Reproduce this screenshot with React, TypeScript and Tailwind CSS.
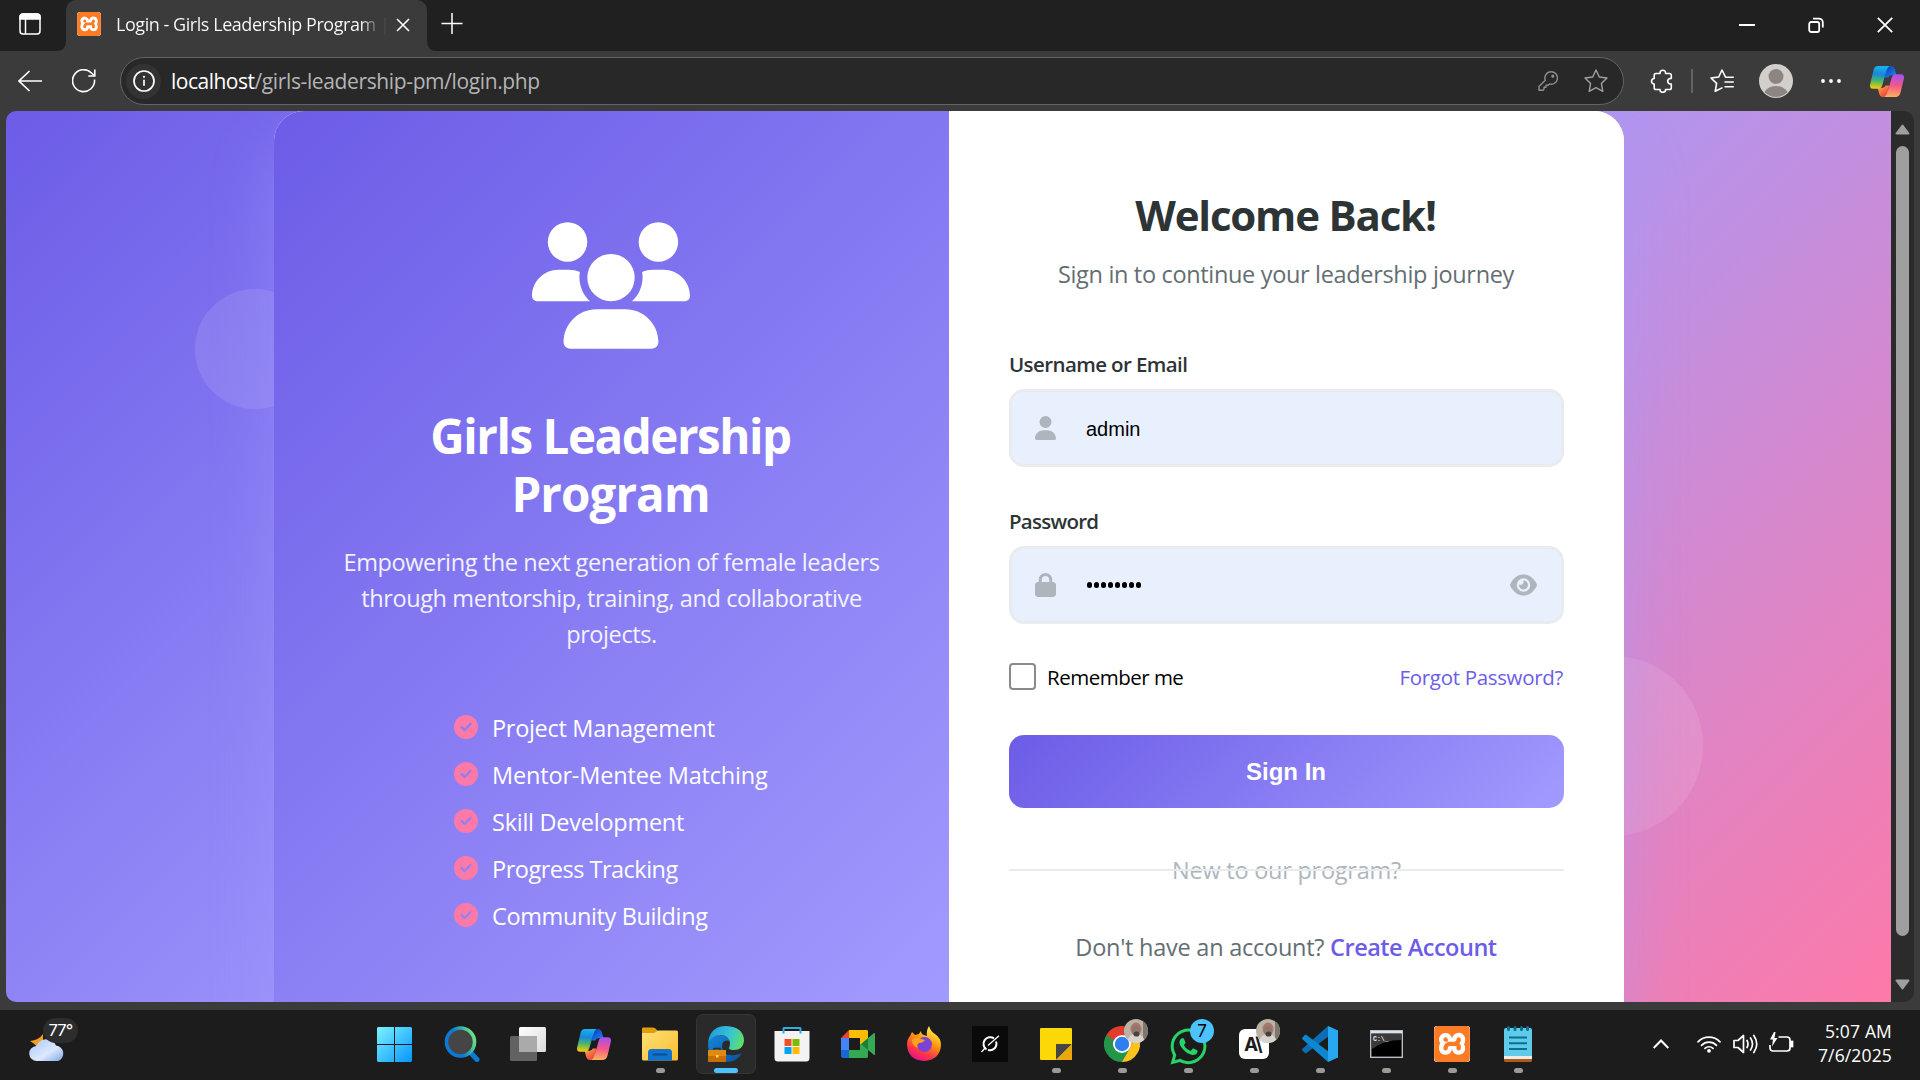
import React from 'react';
import { FaUsers, FaUser, FaLock, FaEye, FaCircleCheck, FaWhatsapp } from 'react-icons/fa6';
import { SiXampp } from 'react-icons/si';

const features = [
  { label: 'Project Management', tracking: 'tracking-[-0.3px]' },
  { label: 'Mentor-Mentee Matching', tracking: 'tracking-[-0.17px]' },
  { label: 'Skill Development', tracking: 'tracking-[-0.26px]' },
  { label: 'Progress Tracking', tracking: 'tracking-[-0.5px]' },
  { label: 'Community Building', tracking: 'tracking-[-0.38px]' },
];

function Copilot({ id, className }: { id: string; className: string }) {
  const ribbon = 'M7.5 0H19Q17 1 16 4.5L12 18.5Q11 22 8 22H3Q-.6 22 .1 18L3.4 4Q4.5 0 7.5 0Z';
  const fold = 'M16 0H20.5Q23.5 0 24.2 3.5L25.6 9H20.5Q18.6 9 17.8 11L14.4 11Z';
  return (
    <svg viewBox="0 0 33 30" className={className} fill="none">
      <defs>
        <linearGradient id={`${id}a`} x1="8" y1="0" x2="6" y2="22" gradientUnits="userSpaceOnUse">
          <stop offset="0" stopColor="#1bb2f0" />
          <stop offset=".35" stopColor="#1687dc" />
          <stop offset=".65" stopColor="#4bb56b" />
          <stop offset="1" stopColor="#fdcb05" />
        </linearGradient>
        <linearGradient id={`${id}b`} x1="8" y1="0" x2="6" y2="22" gradientUnits="userSpaceOnUse">
          <stop offset="0" stopColor="#fcae5c" />
          <stop offset=".5" stopColor="#f4568c" />
          <stop offset="1" stopColor="#a24ff5" />
        </linearGradient>
        <linearGradient id={`${id}c`} x1="17" y1="0" x2="24" y2="9" gradientUnits="userSpaceOnUse">
          <stop offset="0" stopColor="#0c3fb4" />
          <stop offset="1" stopColor="#1f7df2" />
        </linearGradient>
        <linearGradient id={`${id}d`} x1="17" y1="0" x2="24" y2="9" gradientUnits="userSpaceOnUse">
          <stop offset="0" stopColor="#e8384a" />
          <stop offset="1" stopColor="#ff9a3c" />
        </linearGradient>
      </defs>
      <path d={fold} fill={`url(#${id}c)`} />
      <path d={fold} fill={`url(#${id}d)`} transform="rotate(180 16.5 15)" />
      <path d={ribbon} fill={`url(#${id}a)`} />
      <path d={ribbon} fill={`url(#${id}b)`} transform="rotate(180 16.5 15)" />
    </svg>
  );
}

function Xampp({ className }: { className: string }) {
  return (
    <span className={`${className} grid place-items-center overflow-hidden rounded-[3px] bg-white`}>
      <SiXampp className="h-full w-full text-[#fb7a24]" />
    </span>
  );
}

function TitleBar() {
  return (
    <div className="flex h-[51px] items-start bg-[#202020] text-white">
      <svg className="ml-[19px] mt-[13px] h-[22px] w-[22px]" viewBox="0 0 22 22" fill="none" stroke="#fff" strokeWidth="1.5">
        <rect x="1" y="1" width="20" height="20" rx="3" />
        <path d="M1 4a3 3 0 0 1 3-3h14a3 3 0 0 1 3 3v2H1z" fill="#fff" />
        <path d="M6.5 6v15" />
      </svg>
      <svg className="ml-[15px] h-[51px] w-[10px]" viewBox="0 0 10 51">
        <path d="M0 51Q10 51 10 41V51Z" fill="#3b3b3b" />
      </svg>
      <div className="flex h-[51px] w-[361px] items-center rounded-t-[10px] bg-[#3b3b3b] pl-[11px] pb-[3px]">
        <Xampp className="h-6 w-6" />
        <div className="ml-[15px] w-[272px] whitespace-nowrap bg-linear-to-r from-white from-90% to-[#4a4a4a] to-97% bg-clip-text text-[18px] leading-[26px] tracking-[-0.45px] text-transparent">
          Login - Girls Leadership Program |
        </div>
        <svg className="ml-[8px] mt-[2px] h-[14px] w-[14px]" viewBox="0 0 14 14" stroke="#fff" strokeWidth="1.6">
          <path d="M1 1l12 12M13 1L1 13" />
        </svg>
      </div>
      <svg className="h-[51px] w-[10px]" viewBox="0 0 10 51">
        <path d="M0 41Q0 51 10 51H0Z" fill="#3b3b3b" />
      </svg>
      <svg className="ml-[4px] mt-[13px] h-[21px] w-[22px]" viewBox="0 0 22 21" stroke="#fff" strokeWidth="1.5">
        <path d="M11 0v21M.5 10.5h21" />
      </svg>
      <div className="ml-auto mr-[27px] mt-[17px] flex items-center gap-[53px]">
        <svg className="h-4 w-4" viewBox="0 0 16 16" stroke="#fff" strokeWidth="2">
          <path d="M0 8h16" />
        </svg>
        <svg className="h-4 w-4" viewBox="0 0 16 16" fill="none" stroke="#fff" strokeWidth="1.8">
          <rect x="1.2" y="5" width="10" height="10" rx="2" />
          <path d="M5 1.6h6a3.8 3.8 0 0 1 3.8 3.8v5.2" />
        </svg>
        <svg className="h-4 w-4" viewBox="0 0 16 16" stroke="#fff" strokeWidth="1.8">
          <path d="M.8.8l14.4 14.4M15.2.8L.8 15.2" />
        </svg>
      </div>
    </div>
  );
}

function Toolbar() {
  return (
    <div className="flex h-[60px] items-center bg-[#3b3b3b]">
      <svg className="ml-[18px] h-[22px] w-6" viewBox="0 0 24 22" fill="none" stroke="#fff" strokeWidth="1.6">
        <path d="M24 11H1M11.5 1L1 11l10.5 10" />
      </svg>
      <svg className="ml-[30px] h-6 w-6" viewBox="0 0 24 24" fill="none" stroke="#fff" strokeWidth="1.6">
        <path d="M22.5 10.5A11 11 0 1 1 19.500 4l3 2.600" />
        <path d="M22.800 .5v6.500h-6.500" />
      </svg>
      <div className="ml-6 flex h-12 w-[1504px] items-center rounded-full border-[1.5px] border-[#646464] bg-[#282828] pl-[5px]">
        <span className="grid h-[35px] w-[35px] place-items-center rounded-full bg-[#333]">
          <svg className="h-[22px] w-[22px]" viewBox="0 0 22 22" fill="none" stroke="#fff" strokeWidth="1.7">
            <circle cx="11" cy="11" r="10" />
            <path d="M11 9.8v6" />
            <circle cx="11" cy="6.8" r=".5" strokeWidth="1.2" />
          </svg>
        </span>
        <div className="ml-[10px] whitespace-nowrap text-[21px] leading-[28px]">
          <span className="tracking-[-0.5px] text-white">localhost</span>
          <span className="tracking-[-0.37px] text-[#b4b4b4]">/girls-leadership-pm/login.php</span>
        </div>
        <svg className="ml-auto h-5 w-5" viewBox="0 0 20 20" fill="none" stroke="#8f8f8f" strokeWidth="1.4" strokeLinejoin="round">
          <path d="M13 .8a6.200 6.200 0 1 1-1.600 12.100l-1.400 1.400H8v2H6v2l-1 1H1V15.600l6.300-6.300A6.200 6.200 0 0 1 13 .8z" />
          <circle cx="14.8" cy="5.2" r=".9" fill="#8f8f8f" />
        </svg>
        <svg className="ml-[26px] mr-[15px] h-6 w-6" viewBox="0 0 24 24" fill="none" stroke="#a0a0a0" strokeWidth="1.4" strokeLinejoin="round">
          <path d="M12 1l3.300 7 7.700 1-5.600 5.400 1.400 7.900L12 18.600 5.200 22.300l1.400-7.900L1 9l7.700-1z" />
        </svg>
      </div>
      <svg className="ml-[26px] h-6 w-6" viewBox="0 0 24 24" fill="none" stroke="#fff" strokeWidth="1.6" strokeLinejoin="round">
        <path d="M6 4.500H10V4A2.800 2.800 0 0 1 15.600 4V4.500H19.500A1.800 1.800 0 0 1 21.300 6.300V9.500H20A2.800 2.800 0 0 0 20 15H21.300V18.700A1.800 1.800 0 0 1 19.500 20.500H15.600A2.800 2.800 0 0 1 10 20.500H6A1.800 1.800 0 0 1 4.200 18.700V15H3.800A2.800 2.800 0 0 1 3.800 9.500H4.200V6.300A1.800 1.800 0 0 1 6 4.500Z" />
      </svg>
      <span className="ml-[17px] h-6 w-[1.5px] bg-[#646464]" />
      <svg className="ml-[17px] h-6 w-6" viewBox="0 0 24 24" fill="none" stroke="#fff" strokeWidth="1.6" strokeLinejoin="round">
        <path d="M23.800 8.200h-8.300L12 1 8.700 8 1 9l5.600 5.400-1.400 7.900L12.500 18.600M14.500 13h9.300M14.500 17.800h9.300" />
      </svg>
      <svg className="ml-[25px] h-[34px] w-[34px]" viewBox="0 0 34 34">
        <clipPath id="avatar"><circle cx="17" cy="17" r="16" /></clipPath>
        <circle cx="17" cy="17" r="17" fill="#d3d0cc" />
        <g clipPath="url(#avatar)" fill="#8b8682">
          <circle cx="17" cy="12.5" r="7.5" />
          <ellipse cx="17" cy="33" rx="13" ry="11" />
        </g>
      </svg>
      <svg className="ml-[28px] h-1 w-5" viewBox="0 0 20 4" fill="#fff">
        <circle cx="2" cy="2" r="1.9" />
        <circle cx="10" cy="2" r="1.9" />
        <circle cx="18" cy="2" r="1.9" />
      </svg>
      <Copilot id="tb" className="ml-[29px] h-[31px] w-[34px]" />
    </div>
  );
}

function BrandPanel() {
  return (
    <section className="flex w-[675px] flex-col rounded-tl-[30px] bg-[linear-gradient(135deg,#6c5ce7,#a29bfe)] pt-[111px] text-white">
      <FaUsers className="mr-px h-[127px] w-[158px] self-center" />
      <h1 className="mr-[2px] mt-[58px] text-center text-[47.5px] font-bold leading-[57.6px] tracking-[-1.45px]">
        <span className="block h-[57.6px]">Girls Leadership</span>
        <span className="block h-[57.6px] tracking-[-0.9px]">Program</span>
      </h1>
      <p className="mt-[22px] text-center text-[23.5px] leading-[36px] tracking-[-0.4px] text-white/90">
        Empowering the next generation of female leaders
        <br />
        through mentorship, training, and collaborative
        <br />
        projects.
      </p>
      <ul className="ml-[180px] mt-[53px]">
        {features.map((f) => (
          <li key={f.label} className="flex h-[47px] items-center">
            <FaCircleCheck className="mb-1 h-6 w-6 text-[#fd79a8]" />
            <span className={`ml-[14px] text-[23.5px] leading-[47px] ${f.tracking}`}>{f.label}</span>
          </li>
        ))}
      </ul>
    </section>
  );
}

function LoginPanel() {
  return (
    <section className="flex w-[675px] flex-col rounded-tr-[30px] bg-white px-[60px] pt-[79px] text-[#2d3436]">
      <h2 className="mr-[2px] text-center text-[42px] font-bold leading-[50px] tracking-[-1.2px]">Welcome Back!</h2>
      <p className="mr-px mt-4 text-center text-[23.5px] leading-[36px] tracking-[-0.33px] text-[#636e72]">
        Sign in to continue your leadership journey
      </p>

      <label className="mt-[57px] text-[20.5px] font-semibold leading-[30px] tracking-[-0.6px]">Username or Email</label>
      <div className="mt-[10px] flex h-[78px] items-center rounded-[15px] border-[3px] border-[#e9ecef] bg-[#e8f0fe] pl-[23px]">
        <FaUser className="h-6 w-[21px] text-[#adb5bd]" />
        <span className="ml-[30px] mt-[2px] font-['Liberation_Sans'] text-[20px] leading-6 text-black">admin</span>
      </div>

      <label className="mt-[39px] text-[20.5px] font-semibold leading-[30px] tracking-[-0.75px]">Password</label>
      <div className="mt-[10px] flex h-[78px] items-center rounded-[15px] border-[3px] border-[#e9ecef] bg-[#e8f0fe] pl-[23px] pr-6">
        <FaLock className="h-6 w-[21px] text-[#adb5bd]" />
        <div className="ml-[31px] flex gap-[1.7px]">
          {Array.from({ length: 8 }, (_, i) => (
            <span key={i} className="h-[5.3px] w-[5.3px] rounded-full bg-black" />
          ))}
        </div>
        <FaEye className="ml-auto h-6 w-[27px] text-[#adb5bd]" />
      </div>

      <div className="mt-[39px] flex h-[27px] items-center text-[20.5px] leading-[27px]">
        <span className="h-[27px] w-[27px] rounded-[4px] border-2 border-[#8a8a8a] bg-white" />
        <span className="ml-[11px] mt-px tracking-[-0.5px] text-black">Remember me</span>
        <a className="ml-auto mr-px mt-px tracking-[-0.32px] text-[#6c5ce7]">Forgot Password?</a>
      </div>

      <button className="mt-[45px] h-[73px] rounded-[15px] bg-[linear-gradient(135deg,#6c5ce7,#a29bfe)] pr-px font-['Liberation_Sans'] text-[24px] font-bold text-white">
        Sign In
      </button>

      <div className="relative mt-[44px] text-center text-[23.5px] leading-[36px] tracking-[-0.25px] text-[#adb5bd]">
        New to our program?
        <span className="absolute inset-x-0 top-[17px] h-[2px] bg-[#e9ecef]" />
      </div>

      <p className="mr-px mt-[41px] text-center text-[23.5px] leading-[36px] tracking-[-0.25px] text-[#636e72]">
        Don't have an account? <a className="font-semibold tracking-[-0.5px] text-[#6c5ce7]">Create Account</a>
      </p>
    </section>
  );
}

function Viewport() {
  return (
    <main className="flex h-[899px] bg-[#3b3b3b] px-[6px] pb-[8px]">
      <div className="relative flex w-[1885px] items-stretch overflow-hidden rounded-l-[10px] bg-[linear-gradient(135deg,#6c5ce7_0%,#a29bfe_50%,#fd79a8_100%)] pl-[268px]">
        <span className="absolute left-[189px] top-[178px] h-[120px] w-[120px] rounded-full bg-white/10" />
        <span className="absolute left-[1517px] top-[545px] h-[180px] w-[180px] rounded-full bg-white/10" />
        <div className="relative flex rounded-t-[30px] bg-white shadow-[0_36px_60px_rgba(162,155,254,0.4)]">
          <BrandPanel />
          <LoginPanel />
        </div>
      </div>
      <div className="flex w-[23px] flex-col items-center rounded-r-[10px] bg-[#2b2b2b]">
        <svg className="mt-[13px] h-[11px] w-[15px]" viewBox="0 0 15 11">
          <path d="M7.500 1.500L13.500 9.500H1.500Z" fill="#9f9f9f" stroke="#9f9f9f" strokeWidth="2" strokeLinejoin="round" />
        </svg>
        <span className="mt-[11px] h-[790px] w-[13px] rounded-full bg-[#9f9f9f]" />
        <svg className="mt-[43px] h-[11px] w-[15px]" viewBox="0 0 15 11">
          <path d="M7.500 9.500L13.500 1.500H1.500Z" fill="#9f9f9f" stroke="#9f9f9f" strokeWidth="2" strokeLinejoin="round" />
        </svg>
      </div>
    </main>
  );
}

function Photo() {
  return (
    <svg className="absolute -top-[7px] left-[35px] h-6 w-6" viewBox="0 0 24 24">
      <clipPath id="photo"><circle cx="12" cy="12" r="12" /></clipPath>
      <g clipPath="url(#photo)">
        <rect width="24" height="24" fill="#b9b3a6" />
        <rect x="19" width="5" height="24" fill="#7d776e" />
        <path d="M3 24Q4 15 12 15T21 24Z" fill="#d8d4cc" />
        <ellipse cx="12" cy="10" rx="5.5" ry="6.5" fill="#b0746c" />
        <ellipse cx="12" cy="11.5" rx="4" ry="5" fill="#8a7a6e" />
        <ellipse cx="12.5" cy="15" rx="3" ry="2.6" fill="#4a413c" />
      </g>
    </svg>
  );
}

function Cell({ children, running, active }: { children: React.ReactNode; running?: boolean; active?: boolean }) {
  return (
    <div className="relative flex h-[70px] w-[66px] flex-col items-center">
      {active && <span className="absolute left-[3px] top-1 h-[60px] w-[60px] rounded-[7px] border border-[#353535] bg-[#2a2a2a]" />}
      <div className="relative mt-4 grid h-9 w-full place-items-center">{children}</div>
      {running && <span className="mt-[6px] h-[5px] w-[9px] rounded-full bg-[#9a9a9a]" />}
      {active && <span className="relative mt-[6px] h-[5px] w-6 rounded-full bg-[#4cc2ff]" />}
    </div>
  );
}

function Taskbar() {
  return (
    <footer className="flex h-[70px] bg-[#1c1c1c] text-white">
      <div className="relative ml-[26px] h-full w-[60px]">
        <svg className="absolute left-[3px] top-[24px] h-[28px] w-[38px]" viewBox="0 0 38 28">
          <defs>
            <linearGradient id="cloud" x1="0" y1="0" x2="1" y2="1">
              <stop offset="0" stopColor="#a9c7fb" />
              <stop offset=".6" stopColor="#dce8fd" />
              <stop offset="1" stopColor="#7fa4e8" />
            </linearGradient>
          </defs>
          <path d="M1 7Q10 6 14 0V14H9Q5 9 1 7Z" fill="#f99d1c" />
          <path d="M8 27a7.500 7.500 0 0 1-.5-15A10.500 10.500 0 0 1 27 11.500a8 8 0 0 1 2 15.500Z" fill="url(#cloud)" />
        </svg>
        <span className="absolute left-[17px] top-[8px] grid h-[25px] w-[35px] place-items-center rounded-full bg-[#2d2d2d] font-['Inter'] text-[16.5px] tracking-[-0.8px]">77°</span>
      </div>
      <div className="ml-[277px] flex">
        <Cell>
          <svg className="mr-[3px] h-[35px] w-[35px]" viewBox="0 0 35 35">
            <defs>
              <linearGradient id="win" x1="0" y1="0" x2="35" y2="35" gradientUnits="userSpaceOnUse">
                <stop offset="0" stopColor="#7df3ff" />
                <stop offset="1" stopColor="#0595ff" />
              </linearGradient>
            </defs>
            <path d="M1 0h16v17H0V1zM18 0h16l1 1v16H18zM0 18h17v17H1l-1-1zM18 18h17v16l-1 1H18z" fill="url(#win)" />
          </svg>
        </Cell>
        <Cell>
          <svg className="h-9 w-9" viewBox="0 0 36 36" fill="none">
            <defs>
              <linearGradient id="srch" x1="4" y1="18" x2="30" y2="8" gradientUnits="userSpaceOnUse">
                <stop offset=".35" stopColor="#0a7ad8" />
                <stop offset="1" stopColor="#6ceb7c" />
              </linearGradient>
            </defs>
            <path d="M27 27l6 6.500" stroke="#0a7ad8" strokeWidth="5" strokeLinecap="round" />
            <circle cx="16.5" cy="16" r="14" fill="#454545" stroke="url(#srch)" strokeWidth="3.6" />
          </svg>
        </Cell>
        <Cell>
          <svg className="h-[34px] w-9" viewBox="0 0 36 34">
            <defs>
              <linearGradient id="tv" x1="0" y1="0" x2="1" y2="1">
                <stop offset="0" stopColor="#fff" />
                <stop offset="1" stopColor="#dadada" />
              </linearGradient>
            </defs>
            <rect x="9" width="27" height="25" rx="1.5" fill="url(#tv)" />
            <rect y="9" width="27" height="25" rx="1.5" fill="#626262" />
            <rect x="9" y="9" width="18" height="16" fill="#aaa" />
          </svg>
        </Cell>
        <Cell><Copilot id="tk" className="h-[31px] w-[34px]" /></Cell>
        <Cell running>
          <svg className="h-[34px] w-9" viewBox="0 0 36 34">
            <defs>
              <linearGradient id="fold" x1="0" y1="0" x2="1" y2="1">
                <stop offset="0" stopColor="#ffe07a" />
                <stop offset="1" stopColor="#f9bd2b" />
              </linearGradient>
            </defs>
            <path d="M0 1.500Q0 .500 1.500 .500H11Q13 .500 14 2L16 4V9H0Z" fill="#e09e0c" />
            <path d="M0 6H11Q13 6 14.500 4.500T18 3.500H34.500Q36 3.500 36 5V32Q36 33.500 34.500 33.500H1.500Q0 33.500 0 32Z" fill="url(#fold)" />
            <path d="M6 33.500V25.500Q6 22 9.500 22H26.500Q30 22 30 25.500V33.500Z" fill="#1173cc" />
            <path d="M11.500 27.500h13" stroke="#0b4f96" strokeWidth="2" strokeLinecap="round" />
          </svg>
        </Cell>
        <Cell active>
          <svg className="h-9 w-9" viewBox="0 0 36 36">
            <defs>
              <linearGradient id="e1" x1="2" y1="8" x2="36" y2="22" gradientUnits="userSpaceOnUse">
                <stop offset="0" stopColor="#1f9fdf" />
                <stop offset=".5" stopColor="#38c3d4" />
                <stop offset="1" stopColor="#66e553" />
              </linearGradient>
              <linearGradient id="e2" x1="0" y1="0" x2="1" y2="1">
                <stop offset="0" stopColor="#1787d9" />
                <stop offset="1" stopColor="#0a50a0" />
              </linearGradient>
            </defs>
            <path d="M0 18Q1 9 11 9Q20 9 22 15Q14 13 14 21Q15 31 27 29Q33 28 34 27Q29 36 18 36Q0 35 0 18Z" fill="url(#e2)" />
            <path d="M0 17Q2 0 18 0Q36 1 36 15Q35 24 26 24Q21 24 21 22Q22 20 22 17Q21 9 12 9Q4 9 0 17Z" fill="url(#e1)" />
            <rect y="24" width="18" height="12" fill="#c46e04" />
            <rect y="24" width="18" height="6" fill="#e08a12" />
            <path d="M6 24V22.500H12V24" fill="none" stroke="#3a2a18" strokeWidth="1.5" />
            <rect x="8" y="29" width="2.5" height="2.5" fill="#ffe04a" />
          </svg>
        </Cell>
        <Cell>
          <svg className="h-9 w-9" viewBox="0 0 36 36">
            <path d="M.500 5H35.500V32Q35.500 35.500 32 35.500H4Q.500 35.500 .500 32Z" fill="#f3f3f3" />
            <path d="M9.500 7.500V2.500Q9.500 2 10 2H26Q26.500 2 26.500 2.500V7.500" fill="none" stroke="#29aee8" strokeWidth="2" />
            <path d="M10.500 13h7v7h-7z" fill="#f25022" />
            <path d="M18.500 13h7v7h-7z" fill="#7fba00" />
            <path d="M10.500 21h7v7h-7z" fill="#00a4ef" />
            <path d="M18.500 21h7v7h-7z" fill="#ffb900" />
          </svg>
        </Cell>
        <Cell>
          <svg className="h-7 w-[34px]" viewBox="0 0 34 28">
            <path d="M8 0H26Q27 0 27 1.500V14H19V8H8Z" fill="#fbbc04" />
            <path d="M8 0V8H0Z" fill="#ea4335" />
            <path d="M0 8H8V20H0Z" fill="#4285f4" />
            <path d="M0 20H8V28H2Q0 28 0 26Z" fill="#1967d2" />
            <path d="M8 20H19V14H27V26.500Q27 28 25.500 28H8Z" fill="#34a853" />
            <path d="M20 14L27 8V20Z" fill="#188038" />
            <path d="M27 8L33 3Q34 2.500 34 4V24Q34 25.500 33 25L27 20Z" fill="#34a853" />
          </svg>
        </Cell>
        <Cell>
          <svg className="h-9 w-[34px]" viewBox="0 0 34 36">
            <defs>
              <linearGradient id="ff" x1="26" y1="2" x2="10" y2="34" gradientUnits="userSpaceOnUse">
                <stop offset="0" stopColor="#fff44f" />
                <stop offset=".4" stopColor="#ff980e" />
                <stop offset=".75" stopColor="#ff3647" />
                <stop offset="1" stopColor="#e31587" />
              </linearGradient>
            </defs>
            <path d="M5 6Q7 8 8 9L12 8Q13 6 14 5Q14 8 17 9L20 10Q19 5 22 0Q24 6 28 8Q34 12 34 19Q33 34 17 35Q1 34 0 19Q0 13 3 10Q4 8 5 6Z" fill="url(#ff)" />
            <circle cx="17.5" cy="18.5" r="7.5" fill="#7a43d6" />
            <path d="M5 14Q9 10 14 13L18 14Q16 17 12 17Q9 19 11 22Q5 20 5 14Z" fill="#ffa21a" />
          </svg>
        </Cell>
        <Cell>
          <svg className="h-9 w-9" viewBox="0 0 36 36" fill="none" stroke="#fff">
            <rect width="36" height="36" fill="#0a0a0a" stroke="none" />
            <path d="M14.500 23.500A6.500 6.500 0 0 1 22 12.300M24 15.500A6.500 6.500 0 0 1 16 24" strokeWidth="2" />
            <path d="M9.500 26L13.500 21.500M16 19.500L27 9.800" strokeWidth="1.3" />
          </svg>
        </Cell>
        <Cell running>
          <svg className="h-8 w-8" viewBox="0 0 32 32">
            <rect width="32" height="32" rx="1" fill="#fdd808" />
            <path d="M16 16H32L16 32Z" fill="#454545" />
            <path d="M32 16V31Q32 32 31 32H16Z" fill="#eaa80c" />
          </svg>
        </Cell>
        <Cell running>
          <svg className="h-9 w-9" viewBox="0 0 36 36">
            <path d="M18 18L2.400 9A18 18 0 0 1 33.600 9Z" fill="#e33b2e" />
            <path d="M18 18L33.600 9A18 18 0 0 1 18 36Z" fill="#fcc31e" />
            <path d="M18 18L18 36A18 18 0 0 1 2.400 9Z" fill="#22974a" />
            <path d="M18 9H33.600L25.800 22.500ZM10.200 22.500L2.400 9L18 12Z" fill="#e33b2e" />
            <path d="M25.800 22.500L18 36L12 24Z" fill="#22974a" />
            <path d="M25.800 22.500L33.600 9H20Z" fill="#fcc31e" />
            <path d="M10.200 22.500L2.400 9L14 17Z" fill="#22974a" />
            <circle cx="18" cy="18" r="9" fill="#fff" />
            <circle cx="18" cy="18" r="7.2" fill="#2d7ff0" />
          </svg>
          <Photo />
        </Cell>
        <Cell running>
          <FaWhatsapp className="h-[41px] w-[41px] text-[#25d366]" />
          <span className="absolute -top-[7px] left-[35px] grid h-6 w-6 place-items-center rounded-full bg-[#4cc2ff] font-['Inter'] text-[17px] leading-none text-black">7</span>
        </Cell>
        <Cell running>
          <span className="grid h-[30px] w-[30px] place-items-center rounded-[6px] bg-white pr-[3px] font-['Inter'] text-[19px] font-bold leading-none tracking-[-1.5px] text-[#1c1c1c]">A\</span>
          <Photo />
        </Cell>
        <Cell running>
          <svg className="h-9 w-9" viewBox="0 0 36 36">
            <path d="M26 0L27 10L4.500 27Q3.500 27.500 2.800 27L.500 24.500Q-.300 23.500 .500 22.800Z" fill="#0b6db5" />
            <path d="M26 36L27 26L4.500 9Q3.500 8.500 2.800 9L.500 11.500Q-.300 12.500 .500 13.200Z" fill="#0f86d0" />
            <path d="M26 0L36 4.500V31.500L26 36Z" fill="#29a8f2" />
          </svg>
        </Cell>
        <Cell running>
          <svg className="h-7 w-[33px]" viewBox="0 0 33 28">
            <rect x=".7" y=".7" width="31.6" height="26.6" fill="#000" stroke="#b9bfc6" strokeWidth="1.4" />
            <rect x="1" y="1" width="31" height="2.5" fill="#dfe3e8" />
            <path d="M2 4H31V10Q14 10 2 19Z" fill="#3a3a3a" />
            <text x="3" y="10.5" fontSize="6.5" fontFamily="Liberation Mono" fontWeight="bold" fill="#eee">C:\_</text>
          </svg>
        </Cell>
        <Cell running><Xampp className="h-9 w-9" /></Cell>
        <Cell running>
          <svg className="h-9 w-7" viewBox="0 0 28 36">
            <path d="M0 30H28V34.500Q28 36 26.500 36H1.500Q0 36 0 34.500Z" fill="#b05a14" />
            <path d="M0 28H28V33H0Z" fill="#ececec" />
            <path d="M0 4Q0 2 2 2H26Q28 2 28 4V30H0Z" fill="#5fcbe8" />
            <path d="M5 11.500h18M5 17.300h18M5 23h18" stroke="#0b6f95" strokeWidth="2" />
            <path d="M4.500 1.500v2M11 1.500v2M17.500 1.500v2M23.500 1.500v2" stroke="#0b6f95" strokeWidth="3" strokeLinecap="round" />
          </svg>
        </Cell>
      </div>
      <div className="ml-auto flex items-center pr-[28px]">
        <svg className="mt-[-3px] h-[10px] w-4" viewBox="0 0 16 10" fill="none" stroke="#fff" strokeWidth="2">
          <path d="M.700 9L8 1.500 15.300 9" />
        </svg>
        <svg className="ml-[28px] mt-[-2px] h-[18px] w-6" viewBox="0 0 24 18" fill="none" stroke="#fff" strokeWidth="1.7" strokeLinecap="round">
          <path d="M1 6.800a15.500 15.500 0 0 1 22 0M4.500 10.300a10.600 10.600 0 0 1 15 0M8 13.400a5.700 5.700 0 0 1 8 0" />
          <circle cx="12" cy="15.8" r="1.9" fill="#fff" stroke="none" />
        </svg>
        <svg className="ml-[12px] mt-[-2px] h-5 w-[25px]" viewBox="0 0 25 20" fill="none" stroke="#fff" strokeWidth="1.7" strokeLinecap="round" strokeLinejoin="round">
          <path d="M1 6.500h4L10.500 1.500v17L5 13.500H1zM14 6.500q2 3.500 0 7M17.500 4q4 6 0 12M20.800 1.500q6 8.500 0 17" />
        </svg>
        <svg className="ml-[11px] mt-[-5px] h-[21px] w-[25px]" viewBox="0 0 25 21" fill="none" stroke="#fff" strokeWidth="1.7">
          <path d="M9.500 5H18a3 3 0 0 1 3 3v8a3 3 0 0 1-3 3H4a3 3 0 0 1-3-3v-3" />
          <path d="M22 9.500h1.500v5H22z" fill="#fff" />
          <path d="M5 0L1 7.500H4L3 14.500L8.500 6H5.500L6.500 0Z" fill="#fff" stroke="none" />
        </svg>
        <div className="-mt-1 ml-[24px] text-right text-[17.5px] leading-[24px]">
          <div className="tracking-[0.15px]">5:07 AM</div>
          <div className="tracking-[0.15px]">7/6/2025</div>
        </div>
      </div>
    </footer>
  );
}

export default function App() {
  return (
    <div className="h-[1080px] w-[1920px] overflow-hidden bg-[#3b3b3b] font-['Open_Sans',sans-serif]">
      <TitleBar />
      <Toolbar />
      <Viewport />
      <Taskbar />
    </div>
  );
}
